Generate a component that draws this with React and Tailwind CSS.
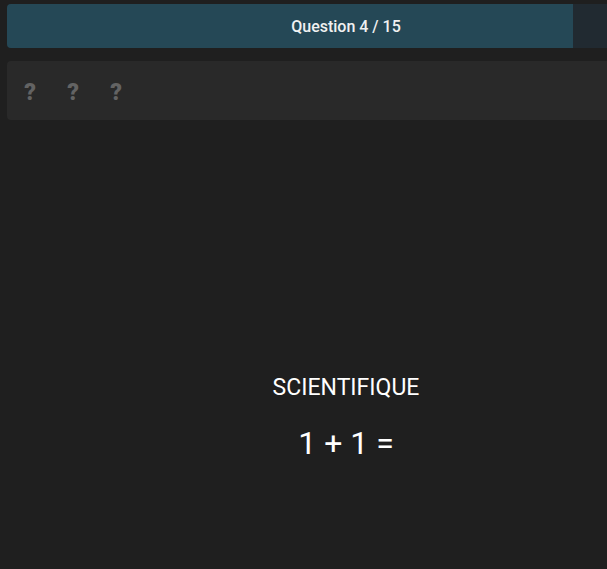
export default function App() {
  const progress = 83.5;

  return (
    <div
      className="min-h-[569px] w-[692px] bg-[#1f1f1f] px-[7px] pt-[4px] text-white"
      style={{ fontFamily: "Roboto, 'Liberation Sans', sans-serif" }}
    >
      <div className="relative h-[44px] overflow-hidden rounded-[4px] bg-[#212a31]">
        <div
          className="absolute inset-y-0 left-0 bg-[#254856]"
          style={{ width: `${progress}%` }}
        />
        <div className="relative flex h-full items-center justify-center pt-[2px] text-[16px] font-medium text-[#f1f1f1]">
          Question 4 / 15
        </div>
      </div>

      <div className="mt-[13px] flex h-[59px] items-center gap-[25px] rounded-[4px] bg-[#292929] pl-[14px] pt-[5px]">
        {[0, 1, 2].map((i) => (
          <span
            key={i}
            className="w-[18px] text-center text-[23px] font-black text-[#636363]"
          >
            ?
          </span>
        ))}
      </div>

      <div className="flex flex-col items-center pt-[253px]">
        <div className="text-[23px] leading-[30px]">SCIENTIFIQUE</div>
        <div className="mt-[20px] text-[32px] leading-[40px]">1 + 1 =</div>
      </div>
    </div>
  );
}
